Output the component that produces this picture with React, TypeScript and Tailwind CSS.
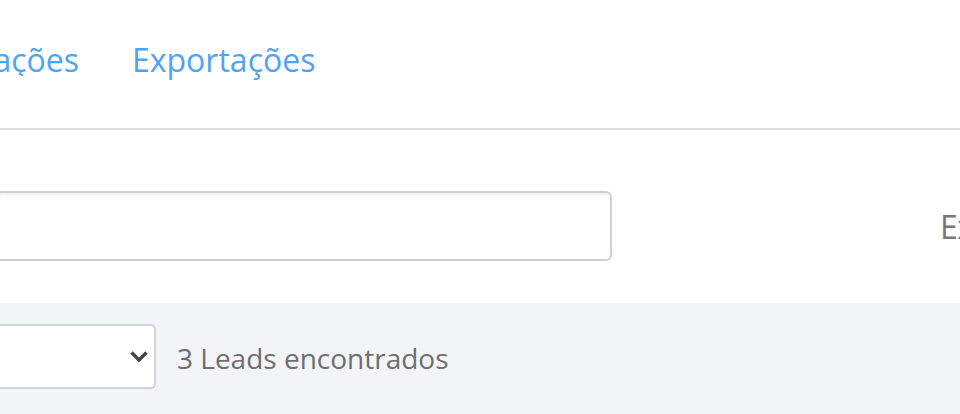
export default function App() {
  return (
    <div className="w-[960px] h-[414px] overflow-hidden bg-white font-['Open_Sans',sans-serif]">
      {/* Tabs */}
      <div className="flex items-end h-[130px] border-b-2 border-[#dcdcdc] pb-[52px]">
        <div className="w-[79px] flex justify-end overflow-hidden shrink-0">
          <span className="whitespace-nowrap text-[32px] leading-none text-[#52a2f3]">Integrações</span>
        </div>
        <span className="ml-[53px] whitespace-nowrap text-[32px] leading-none text-[#52a2f3]">Exportações</span>
      </div>

      {/* Search row */}
      <div className="flex items-start h-[173px] pt-[61px]">
        <div className="w-[612px] h-[70px] shrink-0 rounded-r-[6px] border-2 border-l-0 border-[#cfcfcf] bg-white shadow-[inset_0_2px_2px_rgba(0,0,0,0.06)]"></div>
        <span className="ml-[328px] mt-[20px] whitespace-nowrap text-[32px] leading-none tracking-[-0.5px] text-[#777]">Exportar</span>
      </div>

      {/* Filter bar */}
      <div className="flex items-start h-[111px] bg-[#f3f4f8] pt-[21px]">
        <div className="w-[156px] h-[65px] shrink-0 flex items-center justify-end pr-[6px] rounded-r-[5px] border-2 border-l-0 border-[#d4d4d4] bg-white">
          <svg width="18" height="11" viewBox="0 0 18 11" fill="none">
            <path d="M1.5 1.5 L9 9 L16.5 1.5" stroke="#444" strokeWidth="3.4" />
          </svg>
        </div>
        <span className="ml-[21px] mt-[20px] whitespace-nowrap text-[28px] leading-none text-[#6e6e6e]">3 Leads encontrados</span>
      </div>
    </div>
  );
}
